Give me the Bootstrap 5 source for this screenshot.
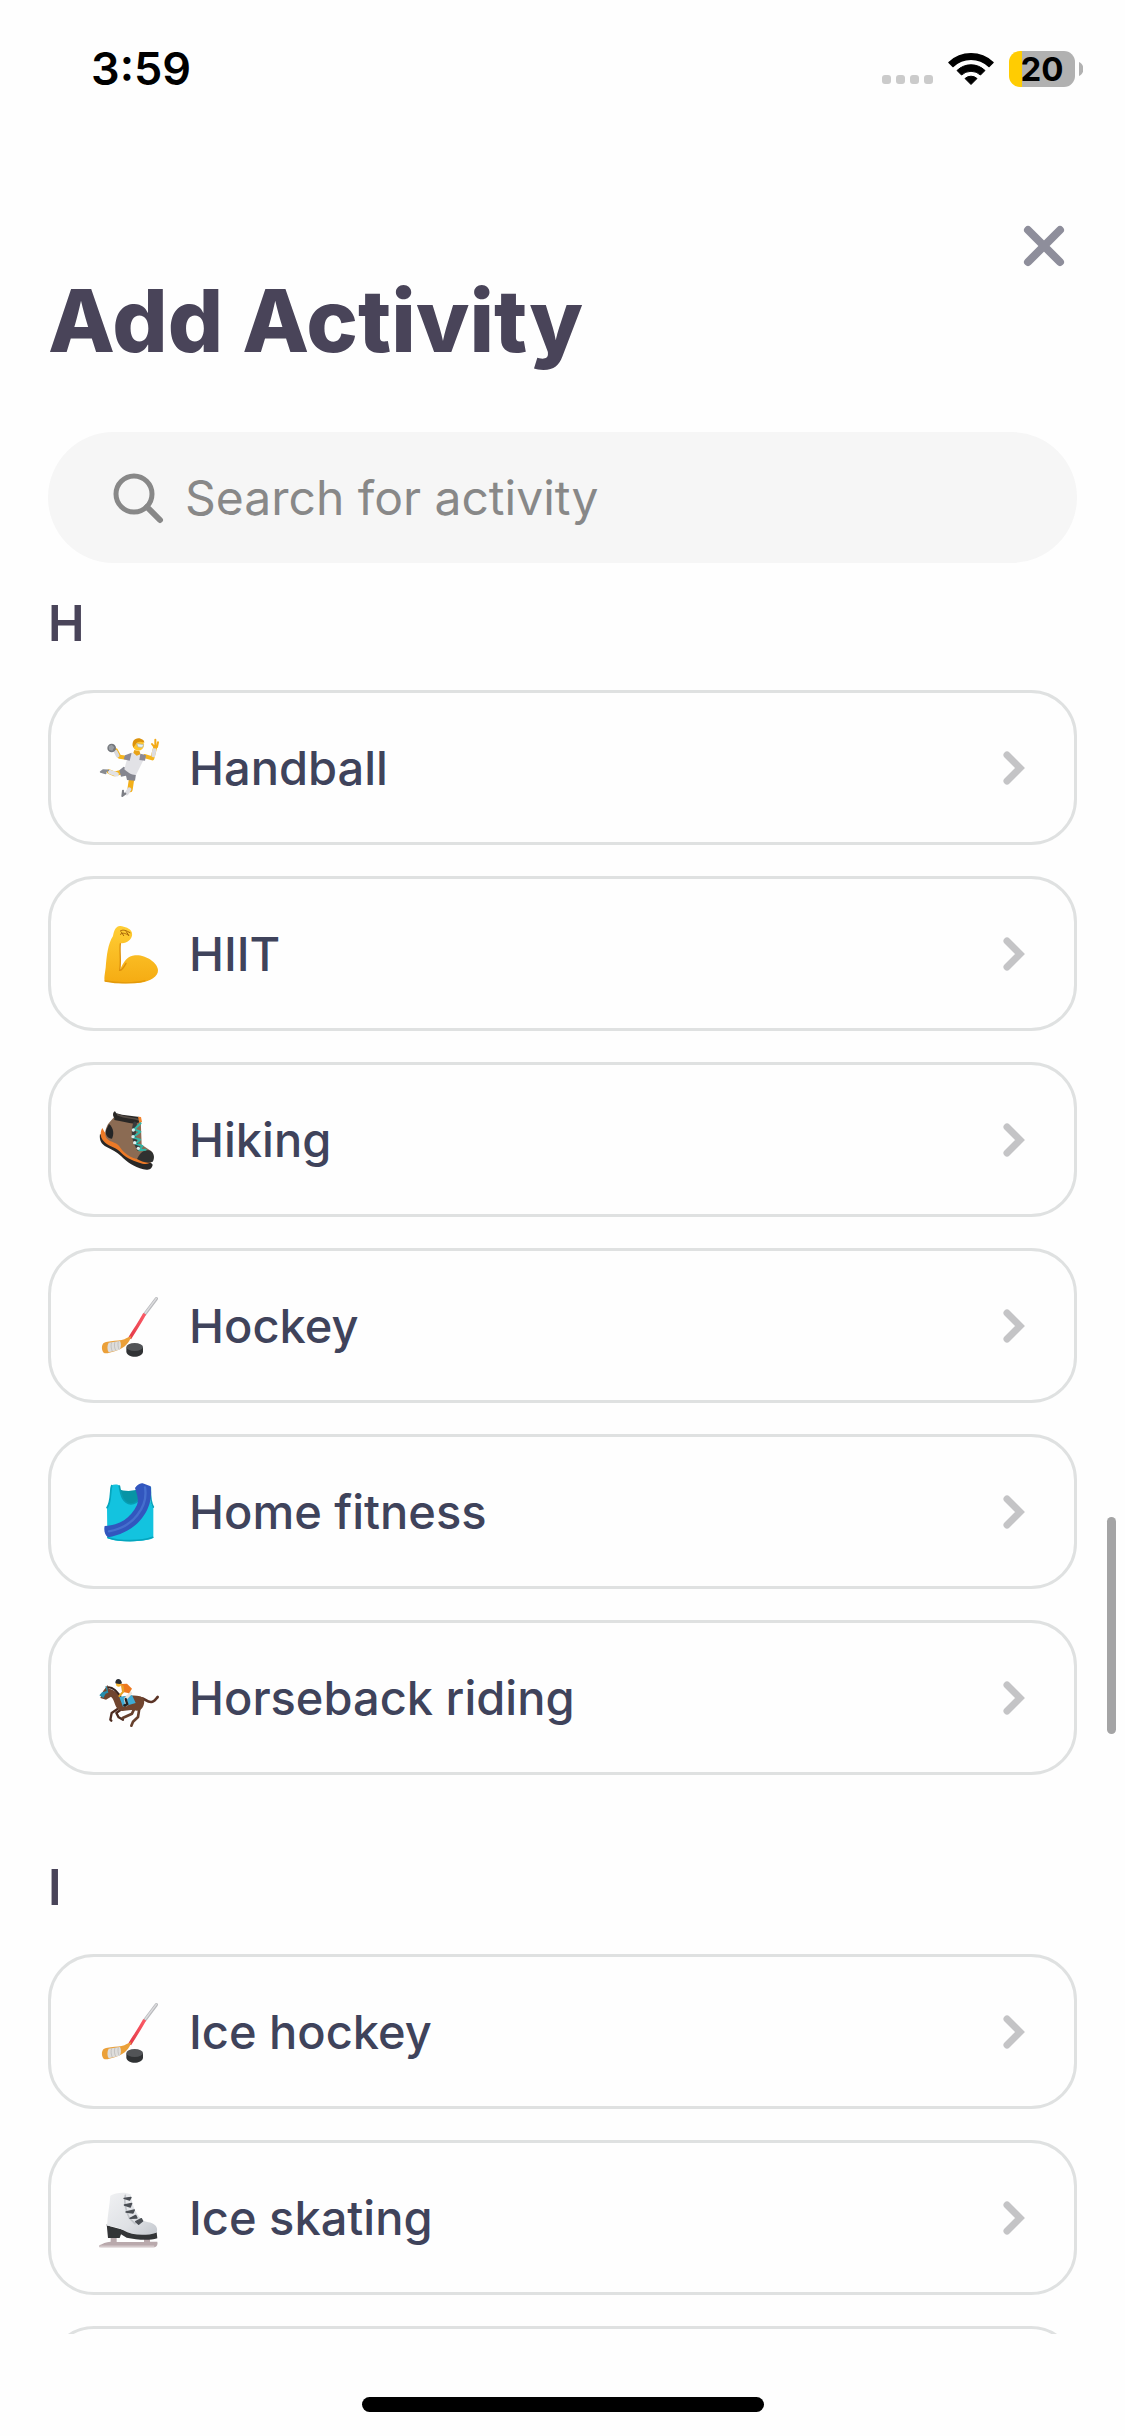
<!DOCTYPE html>
<html lang="en">
<head>
<meta charset="utf-8">
<meta name="viewport" content="width=device-width, initial-scale=1">
<title>Add Activity</title>
<link href="https://cdn.jsdelivr.net/npm/bootstrap@5.3.0/dist/css/bootstrap.min.css" rel="stylesheet">
<style>
  body { background: #fefefe; font-family: Inter, "Liberation Sans", sans-serif; color: #494459; }
  .app-screen { height: 100vh; }
  .status-bar { padding: 42px 42px 0 91px; margin-bottom: 80px; color: #000; }
  .status-time { font-size: 45px; line-height: 54px; font-weight: 600; }
  .status-gap { gap: 15px; }
  .battery-level { width: 66px; height: 36px; border-radius: 11px; font-size: 33px; line-height: 36px; font-weight: 700; background: linear-gradient(to right, #ffcc02 13px, #b1b1b1 13px); }
  .side-pad { padding-left: 48px; padding-right: 48px; }
  .close-btn { width: 44px; height: 44px; margin-right: 11px; color: #8e8e9b; }
  .screen-title { font-size: 87px; line-height: 106px; font-weight: 800; color: #494459; margin-bottom: 58px; }
  .search-pill { height: 131px; border-radius: 66px; background: #f6f6f6; padding: 0 64px; gap: 21px; color: #888; }
  .search-pill .form-control { font-size: 48px; line-height: 60px; color: #494459; }
  .search-pill .form-control::placeholder { color: #888; opacity: 1; }
  .list-scroll { padding-top: 31px; }
  .letter-head { font-size: 49px; line-height: 60px; font-weight: 600; margin-bottom: 36px; color: #494459; }
  .activity-group { margin-bottom: 83px; }
  .activity-stack { gap: 31px; }
  .activity-link { min-height: 155px; border: 3px solid #dfe1e1; border-radius: 46px; padding: 0 49px 0 47px; gap: 27px; font-size: 47px; line-height: 58px; font-weight: 500; color: #3f435b; }
  .activity-link .chev { color: #c4c4c6; }
  .scroll-thumb { top: 1517px; right: 9px; width: 9px; height: 217px; background: #a4a4a5; border-radius: 5px; }
  .home-area { height: 102px; padding-bottom: 24px; }
  .home-bar { width: 402px; height: 15px; border-radius: 8px; background: #000; }
</style>
<script src="https://cdn.jsdelivr.net/npm/bootstrap@5.3.0/dist/js/bootstrap.bundle.min.js"></script>
</head>
<body>
<svg class="position-absolute" width="0" height="0" aria-hidden="true">
  <symbol id="chevron" viewBox="0 0 22 34"><path d="M4 4l13 13L4 30" fill="none" stroke="currentColor" stroke-width="7" stroke-linecap="round" stroke-linejoin="miter"/></symbol>
  <linearGradient id="skin" x1="0" y1="0" x2="0" y2="1"><stop offset="0" stop-color="#ffce35"/><stop offset="1" stop-color="#f5ab12"/></linearGradient>
  <linearGradient id="shaft" x1="0" y1="1" x2="1" y2="0"><stop offset="0" stop-color="#e33a48"/><stop offset="1" stop-color="#fb5a66"/></linearGradient>
  <linearGradient id="leather" x1="0" y1="0" x2="1" y2="1"><stop offset="0" stop-color="#f0f1f3"/><stop offset=".6" stop-color="#dfe1e5"/><stop offset="1" stop-color="#c4c8ce"/></linearGradient>
  <symbol id="hockey" viewBox="54 55 192 192">
    <path d="M229 69L194 116" stroke="#b9babd" stroke-width="10" stroke-linecap="round"/>
    <path d="M229 68L196 112" stroke="#dddddf" stroke-width="4" stroke-linecap="round"/>
    <path d="M194 114C180 140 165 162 149 188" stroke="url(#shaft)" stroke-width="10" fill="none"/>
    <path d="M140 187l14-6c-6 20-20 35-38 41-16 6-31 11-42 11-8-4-11-20-5-29 5-7 20-7 35-9 15-1 28-2 36-8z" fill="#eba039"/>
    <path d="M86 201l34-5c4 7 4 19-1 26l-33 8c-5-8-5-21 0-29z" fill="#dedddb"/>
    <path d="M95 200c-3 9-2 18 2 27M105 198c-3 9-2 18 2 26M115 197c-2 8-1 17 2 24" fill="none" stroke="#b3b2b0" stroke-width="2"/>
    <path d="M139 215v13c3 20 47 20 50 0v-13z" fill="#303234"/>
    <ellipse cx="164" cy="214" rx="25" ry="12" fill="#525457"/>
  </symbol>
</svg>
<div class="app-screen d-flex flex-column position-relative overflow-hidden">
  <div class="status-bar d-flex justify-content-between align-items-center flex-shrink-0">
    <div class="status-time">3:59</div>
    <div class="d-flex align-items-end status-gap">
      <svg width="51" height="12" viewBox="0 0 51 12" fill="#cbcbcb"><rect width="9" height="9" rx="3"/><rect x="14" width="9" height="9" rx="3"/><rect x="28" width="9" height="9" rx="3"/><rect x="42" width="9" height="9" rx="3"/></svg>
      <svg width="46" height="36" viewBox="0 0 46 36"><path d="M1 11.500A32 32 0 0 1 45 11.500L41 15.500A26 26 0 0 0 5 15.500Z" stroke="#000" stroke-width="1.500" stroke-linejoin="round"/><path d="M9 19.500A20 20 0 0 1 37 19.500L32.500 24A14 14 0 0 0 13.500 24Z" stroke="#000" stroke-width="1" stroke-linejoin="round"/><path d="M17 27.500A9 9 0 0 1 29 27.500L23 33.500Z" stroke="#000" stroke-width="1" stroke-linejoin="round"/></svg>
      <div class="d-flex align-items-center gap-1">
        <div class="battery-level text-center">20</div>
        <svg width="4" height="14" viewBox="0 0 4 14"><path d="M0 0c6 3 6 11 0 14z" fill="#b1b1b1"/></svg>
      </div>
    </div>
  </div>
  <header class="side-pad flex-shrink-0">
    <div class="d-flex justify-content-end mt-5">
      <button type="button" class="close-btn btn p-0 border-0 d-flex align-items-center justify-content-center" aria-label="Close">
        <svg width="42" height="42" viewBox="0 0 42 42"><path d="M5 5l32 32M37 5L5 37" stroke="currentColor" stroke-width="8" stroke-linecap="round"/></svg>
      </button>
    </div>
    <h1 class="screen-title">Add Activity</h1>
    <form class="search-pill d-flex align-items-center" role="search">
      <label for="activity-search" class="d-flex"><svg width="52" height="52" viewBox="0 0 52 52" fill="none" stroke="currentColor" stroke-linecap="round"><circle cx="22" cy="22" r="18" stroke-width="5"/><path d="M35 35l13 13" stroke-width="6"/></svg></label>
      <input id="activity-search" type="text" class="form-control border-0 bg-transparent p-0 shadow-none" placeholder="Search for activity" aria-label="Search for activity">
    </form>
  </header>
  <main class="list-scroll side-pad flex-grow-1 overflow-hidden">
    <section class="activity-group">
      <h2 class="letter-head">H</h2>
      <div class="activity-stack d-flex flex-column">
        <a href="#" class="activity-link d-flex align-items-center text-decoration-none">
          <svg width="64" height="64" viewBox="54 47 192 192" fill="none" stroke-linecap="round" stroke-linejoin="round">
            <path d="M108 90l10 19 22 3" stroke="#f5b51d" stroke-width="12"/><path d="M107 94l6 12" stroke="#d9d9dd" stroke-width="11"/>
            <circle cx="95" cy="83" r="13" fill="#74777c"/><path d="M86 78l9-5 8 8-6 10-10-3z" fill="#9a9ea3"/>
            <path d="M193 107l24 7 9-35" stroke="#f5b51d" stroke-width="12"/><path d="M220 105l3-16" stroke="#dcdce0" stroke-width="12"/>
            <path d="M224 81l-8-10M226 77v-19M231 80l3-14" stroke="#f3aa18" stroke-width="6"/>
            <path d="M122 156l-18 5-17-7" stroke="#f4b51f" stroke-width="14"/><path d="M110 162l-20-7" stroke="#e2e2e5" stroke-width="13"/><path d="M85 150l-15-1-8 6 15 4" fill="#888b91" stroke="#888b91" stroke-width="5"/>
            <path d="M155 174l-5 34" stroke="#f2af1a" stroke-width="16"/><path d="M148 207l-8 12" stroke="#dddde1" stroke-width="12"/><path d="M129 211l-2 16 9-7" fill="#7d7f85" stroke="#7d7f85" stroke-width="6"/>
            <path d="M131 139l37 22-3 20-24-2-3-13-15 3-5-19z" fill="#858690"/>
            <path d="M157 97l35 5-3 20-21 42c-12 1-26-8-35-17l8-31z" fill="#e2e2e6"/>
            <path d="M155 97l-20 8-4 12 18 4zM181 100l17 5-3 16-17-2z" fill="#8b8996"/>
            <path d="M163 89l16 4 2 9-11 4-10-9z" fill="#e9a318"/><circle cx="175" cy="74" r="17" fill="#ffc62c"/>
            <path d="M160 82c-8-20 7-32 22-27 8 2 11 6 11 12-12-5-22-3-25 3z" fill="#dc920c"/>
            <path d="M171 70l20 3-4 8-12-1z" fill="#e9f1f4" stroke="#abb9bd" stroke-width="2"/>
          </svg>
          <span class="flex-grow-1">Handball</span><svg class="chev" width="22" height="34"><use href="#chevron"/></svg>
        </a>
        <a href="#" class="activity-link d-flex align-items-center text-decoration-none">
          <svg width="64" height="64" viewBox="54 50 192 192" fill="none" stroke-linecap="round">
            <path d="M75 228c-4-7 0-24 2-41 3-38 7-72 22-95 3-18 10-31 22-30 13 2 30 7 34 18 4 10-1 23-13 29-6 4-14 5-21 5-3 23 2 51-1 80 10-25 24-43 45-44 29-3 67 20 69 44 1 20-23 34-52 38-31 4-79 2-107-4z" fill="url(#skin)"/>
            <path d="M121 115c-3 24 3 52-2 80 7 1 14-12 19-21" stroke="#dc8f0b" stroke-width="4"/>
            <path d="M121 77c8-6 18-1 29 5M121 87c8-7 17-2 25 3M124 80l7 11M139 79l7 11" stroke="#a96508" stroke-width="3"/><path d="M75 227c36 7 89 8 120-1" stroke="#e39a0b" stroke-width="4"/>
          </svg>
          <span class="flex-grow-1">HIIT</span><svg class="chev" width="22" height="34"><use href="#chevron"/></svg>
        </a>
        <a href="#" class="activity-link d-flex align-items-center text-decoration-none">
          <svg width="64" height="64" viewBox="54 52 192 192" fill="none" stroke-linecap="round" stroke-linejoin="round">
            <path d="M60 129c16 22 35 24 54 37 18 16 34 36 64 43 18 2 34 4 40 13-2 14-15 18-28 14-29-8-49-22-67-40-13-13-27-18-43-27-15-8-23-20-20-40z" fill="#292827"/>
            <path d="M67 112c14 31 39 34 55 54 18 22 42 32 77 34l16 12c-9 11-24 9-37 4-23-6-45-18-60-35-15-14-36-15-48-31-10-11-10-27-3-38z" fill="#ed7a27"/>
            <path d="M105 76l77 9 3 77 27 18c12 9 8 25-8 27-36 4-68-12-85-39-11-15-28-13-37-23-11-11-6-33 4-47z" fill="#8b6b53"/>
            <path d="M87 100c15 12 15 32 9 44-14 0-21-12-18-25z" fill="#242526"/><path d="M171 205c9-18 20-31 40-25 13 7 13 23 7 33-15 8-35-1-47-8z" fill="#303130"/>
            <path d="M103 82c-7-8-3-20 2-20l4 6c23 7 46 8 70 11l4 14-20 6c-21-1-37-8-60-11z" fill="#292725"/><path d="M113 72c24 10 41 9 62 15" stroke="#554c46" stroke-width="5"/>
            <path d="M174 78l9 1 3 15-8 3z" fill="#f18531"/><path d="M165 99c-7 23-6 48 11 76" stroke="#393b3b" stroke-width="12"/>
            <path d="M182 98l-19 18 18 7-22 17 21 7-14 12 21 7-9 13 19-2" stroke="#31b6a8" stroke-width="6"/>
            <g fill="#dceeed"><circle cx="160" cy="118" r="5"/><circle cx="159" cy="138" r="5"/><circle cx="164" cy="156" r="5"/><circle cx="175" cy="173" r="5"/></g>
          </svg>
          <span class="flex-grow-1">Hiking</span><svg class="chev" width="22" height="34"><use href="#chevron"/></svg>
        </a>
        <a href="#" class="activity-link d-flex align-items-center text-decoration-none">
          <svg width="64" height="64"><use href="#hockey"/></svg>
          <span class="flex-grow-1">Hockey</span><svg class="chev" width="22" height="34"><use href="#chevron"/></svg>
        </a>
        <a href="#" class="activity-link d-flex align-items-center text-decoration-none">
          <svg width="64" height="64" viewBox="54 58 192 192" fill="none" stroke-linecap="round" stroke-linejoin="round">
            <path d="M115 84c18 10 52 9 71-4v40l-30 22-32-11z" fill="#0794a5"/>
            <path d="M93 75c8-5 20-5 26 0 3 31 12 53 34 55 24-1 33-26 32-59l25 8c1 22-3 44 10 61v91c-12 13-121 15-138 0l-1-91c14-21 7-44 12-65z" fill="#13c3df"/>
            <path d="M118 76c5 31 12 52 35 54 24-1 32-27 32-56" stroke="#079db3" stroke-width="5"/>
            <path d="M95 75c-6 22 0 46-14 66M211 81c0 21-1 42 9 58M84 231c36 12 98 12 134-1" stroke="#05a5bd" stroke-width="5"/>
            <path d="M165 82c5-8 15-16 23-14l24 9c4 32-2 60-20 87-19 31-59 58-108 66-10-7-13-22-10-34 46-2 77-23 97-63 5-13 3-24-6-51z" fill="#3256be"/><path d="M195 80c5 29-4 59-23 83-18 24-47 42-85 49" stroke="#456fce" stroke-width="7"/>
          </svg>
          <span class="flex-grow-1">Home fitness</span><svg class="chev" width="22" height="34"><use href="#chevron"/></svg>
        </a>
        <a href="#" class="activity-link d-flex align-items-center text-decoration-none">
          <svg width="64" height="64" viewBox="54 47 192 192" fill="none" stroke-linecap="round" stroke-linejoin="round">
            <path d="M180 143c17 0 18 13 34 12 9 0 13-9 19-15" stroke="#5b3426" stroke-width="8"/>
            <path d="M115 174l-20 14-4 20 3 3M124 177l-15 11 7 13 13 7" stroke="#4c2b20" stroke-width="7"/>
            <path d="M167 166l-11 24-28 13M179 168l-5 32-15 14-5 12" stroke="#66402d" stroke-width="8"/>
            <path d="M77 112l5-8 5 11c16 3 27 15 39 25 18-4 39-6 54-2 14 4 15 17 10 29-5 12-14 17-28 13-18-4-33 7-45-1-15-11-11-28-24-40l-15 9-17-5 8-20z" fill="#70452f"/>
            <path d="M86 111c14 1 22 10 35 26" stroke="#39241d" stroke-width="6"/>
            <path d="M76 107l4 15-14 4-8 9 12 8 7-13 8-3-4-17z" fill="#278dad"/>
            <path d="M118 140l38-6 11 24-38 11z" fill="#3eabd5"/>
            <path d="M144 121l8 8-16 17 4 17" stroke="#ebe5dc" stroke-width="9"/><path d="M137 146l5 16-9 3" stroke="#242323" stroke-width="7"/>
            <path d="M123 101l18-1 15 15-9 14-21-5z" fill="#ee781e"/><path d="M128 108l2 16-12 13" stroke="#e7a324" stroke-width="6"/>
            <circle cx="116" cy="101" r="8" fill="#f5b32e"/><path d="M106 99c-1-17 18-17 20 0-6 4-12 1-20 0z" fill="#292c32"/>
          </svg>
          <span class="flex-grow-1">Horseback riding</span><svg class="chev" width="22" height="34"><use href="#chevron"/></svg>
        </a>
      </div>
    </section>
    <section class="activity-group">
      <h2 class="letter-head">I</h2>
      <div class="activity-stack d-flex flex-column">
        <a href="#" class="activity-link d-flex align-items-center text-decoration-none">
          <svg width="64" height="64"><use href="#hockey"/></svg>
          <span class="flex-grow-1">Ice hockey</span><svg class="chev" width="22" height="34"><use href="#chevron"/></svg>
        </a>
        <a href="#" class="activity-link d-flex align-items-center text-decoration-none">
          <svg width="64" height="64" viewBox="54 47 192 192" fill="none" stroke-linecap="round" stroke-linejoin="round">
            <path d="M92 203h18v12h82v-11h18v10h22c2 7-1 15-8 17H58v-6c10-5 19-10 34-11z" fill="#b9a9ac"/><path d="M62 228h159" stroke="#d4c8ca" stroke-width="5"/>
            <path d="M80 162l10 6c34 8 73 26 140 18l2 18c-27 8-63 4-92-2l-17-10-4 11H84z" fill="#333537"/>
            <path d="M91 76c15-9 43-13 61-4 5 26 9 53 34 76 9 9 28 4 41 18 6 7 5 18 2 21-32 11-75 8-99-7-17-10-33-13-49-14 2-31 7-57 10-90z" fill="url(#leather)"/>
            <path d="M136 75c-4 20 1 45 12 68l17 17" stroke="#c0c3c8" stroke-width="5"/>
            <path d="M132 84l21-3-4 8zM133 104l22-5-4 11zM138 125l25-6-4 9zM150 144l17-9 4 8zM167 154l17-9 4 7-12 10z" fill="#4b4f55" stroke="#4b4f55" stroke-width="4"/>
          </svg>
          <span class="flex-grow-1">Ice skating</span><svg class="chev" width="22" height="34"><use href="#chevron"/></svg>
        </a>
        <div class="activity-link"></div>
      </div>
    </section>
  </main>
  <div class="scroll-thumb position-absolute"></div>
  <footer class="home-area d-flex justify-content-center align-items-end flex-shrink-0"><div class="home-bar"></div></footer>
</div>
</body>
</html>
